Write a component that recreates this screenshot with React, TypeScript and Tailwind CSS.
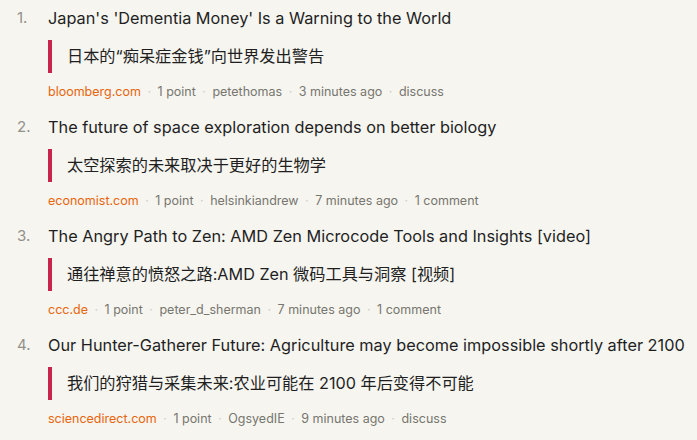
import React from "react";

type Item = {
  n: number;
  title: string;
  zh: string;
  domain: string;
  user: string;
  time: string;
  comments: string;
};

const items: Item[] = [
  {
    n: 1,
    title: "Japan's 'Dementia Money' Is a Warning to the World",
    zh: "日本的“痴呆症金钱”向世界发出警告",
    domain: "bloomberg.com",
    user: "petethomas",
    time: "3 minutes ago",
    comments: "discuss",
  },
  {
    n: 2,
    title: "The future of space exploration depends on better biology",
    zh: "太空探索的未来取决于更好的生物学",
    domain: "economist.com",
    user: "helsinkiandrew",
    time: "7 minutes ago",
    comments: "1 comment",
  },
  {
    n: 3,
    title: "The Angry Path to Zen: AMD Zen Microcode Tools and Insights [video]",
    zh: "通往禅意的愤怒之路:AMD Zen 微码工具与洞察 [视频]",
    domain: "ccc.de",
    user: "peter_d_sherman",
    time: "7 minutes ago",
    comments: "1 comment",
  },
  {
    n: 4,
    title: "Our Hunter-Gatherer Future: Agriculture may become impossible shortly after 2100",
    zh: "我们的狩猎与采集未来:农业可能在 2100 年后变得不可能",
    domain: "sciencedirect.com",
    user: "OgsyedIE",
    time: "9 minutes ago",
    comments: "discuss",
  },
];

const Sep = () => <span className="mx-[6.5px] text-[#cfcec8]">·</span>;

export default function App() {
  return (
    <div
      className="w-[697px] h-[440px] overflow-hidden bg-[#f6f5f0] pt-[8px]"
      style={{ fontFamily: "Inter, 'Noto Sans CJK SC', sans-serif" }}
    >
      {items.map((it) => (
        <div key={it.n} className="flex h-[109px]">
          <div className="w-[48px] pl-[17px] text-[15px] leading-[20px] text-[#92918b]">
            {it.n}.
          </div>
          <div className="flex-1 min-w-0">
            <div className="text-[16.3px] leading-[20px] text-[#1f1f1f] whitespace-nowrap">
              {it.title}
            </div>
            <div className="mt-[12px] h-[33px] border-l-[4px] border-[#c8254c] pl-[15px] flex items-center text-[16.2px] text-[#1f1f1f] whitespace-nowrap">
              {it.zh}
            </div>
            <div className="mt-[11px] text-[12.5px] leading-[16px] text-[#77766f] whitespace-nowrap">
              <span className="text-[#e8650c]">{it.domain}</span>
              <Sep />
              <span>1 point</span>
              <Sep />
              <span>{it.user}</span>
              <Sep />
              <span>{it.time}</span>
              <Sep />
              <span>{it.comments}</span>
            </div>
          </div>
        </div>
      ))}
    </div>
  );
}
